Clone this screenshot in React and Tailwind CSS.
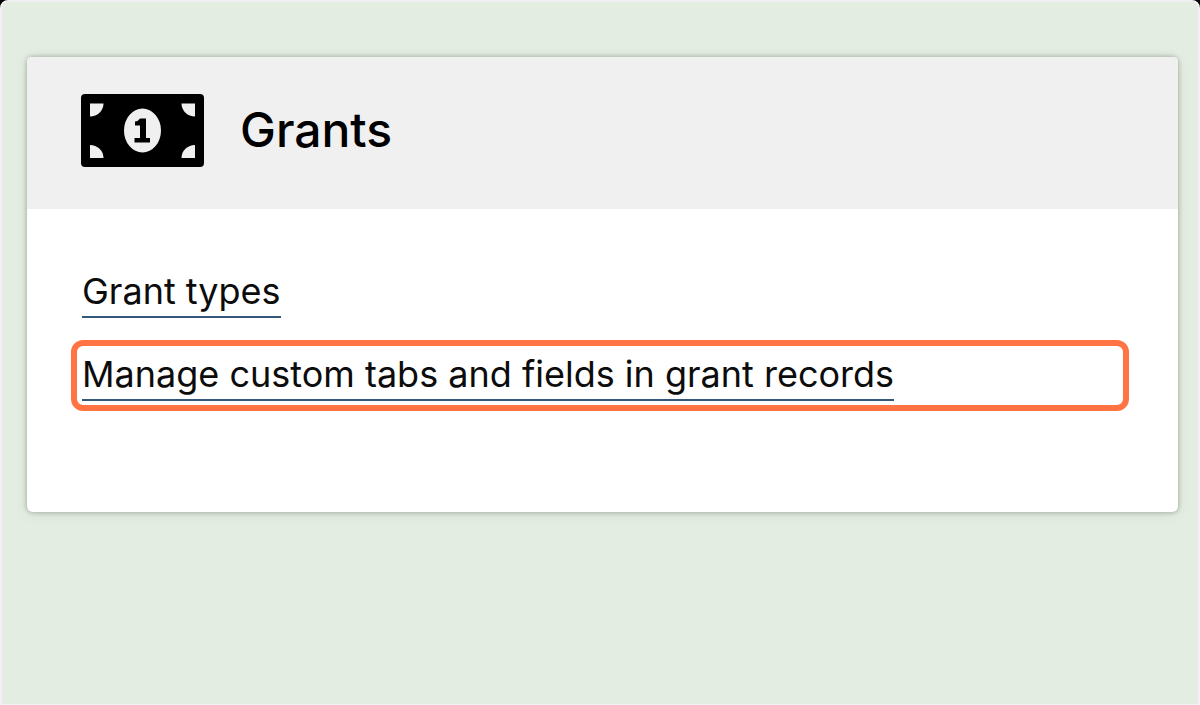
function MoneyIcon() {
  return (
    <svg viewBox="0 0 123 73" className="h-[73px] w-[123px] shrink-0" aria-hidden="true">
      <rect width="123" height="73" rx="4" fill="#000" />
      <g fill="#f0f0f0">
        <path d="M9 9.500h13.500a13.500 13 0 0 1-13.500 13z" />
        <path d="M114 9.500h-13.500a13.500 13 0 0 0 13.500 13z" />
        <path d="M9 64h13.500a13.500 13 0 0 0-13.500-13z" />
        <path d="M114 64h-13.500a13.500 13 0 0 1 13.500-13z" />
        <ellipse cx="61.500" cy="36.500" rx="18.500" ry="22" />
      </g>
      <path d="M59 24.500h6V44h4V48.500H53.500V44H59V31.500H54V27.500q3.500-.5 5-3z" fill="#000" />
    </svg>
  );
}

function CardLink({ children }) {
  return (
    <a href="#" className="inline-block border-b-2 border-[#34587c] text-[36px] leading-[50px] text-[#0c0c0c]">
      {children}
    </a>
  );
}

export default function App() {
  return (
    <div className="min-h-screen bg-black font-['Inter','Liberation_Sans',sans-serif]">
      <main className="min-h-screen rounded-t-lg border-2 border-b border-[#f2f0f5] bg-[#e3ede1] pt-[55px] pr-5 pl-[25px]">
        <section className="rounded-md bg-white shadow-[0_0_4px_1px_rgba(0,0,0,0.2),0_2px_14px_rgba(0,0,0,0.08)]">
          <header className="flex h-[152px] items-center gap-9 rounded-t-sm bg-[#f0f0f0] pr-[55px] pb-1.5 pl-[54px]">
            <MoneyIcon />
            <h1 className="text-[48px] leading-[56px] font-medium text-black">Grants</h1>
          </header>
          <ul className="flex flex-col gap-[31px] px-[55px] pt-[57px] pb-[111px]">
            <li className="flex">
              <CardLink>Grant types</CardLink>
            </li>
            <li className="relative flex">
              <CardLink>Manage custom tabs and fields in grant records</CardLink>
              <span className="pointer-events-none absolute -top-[9px] -right-1.5 -bottom-[10px] -left-[11px] rounded-xl border-6 border-[#ff7442]" />
            </li>
          </ul>
        </section>
      </main>
    </div>
  );
}
